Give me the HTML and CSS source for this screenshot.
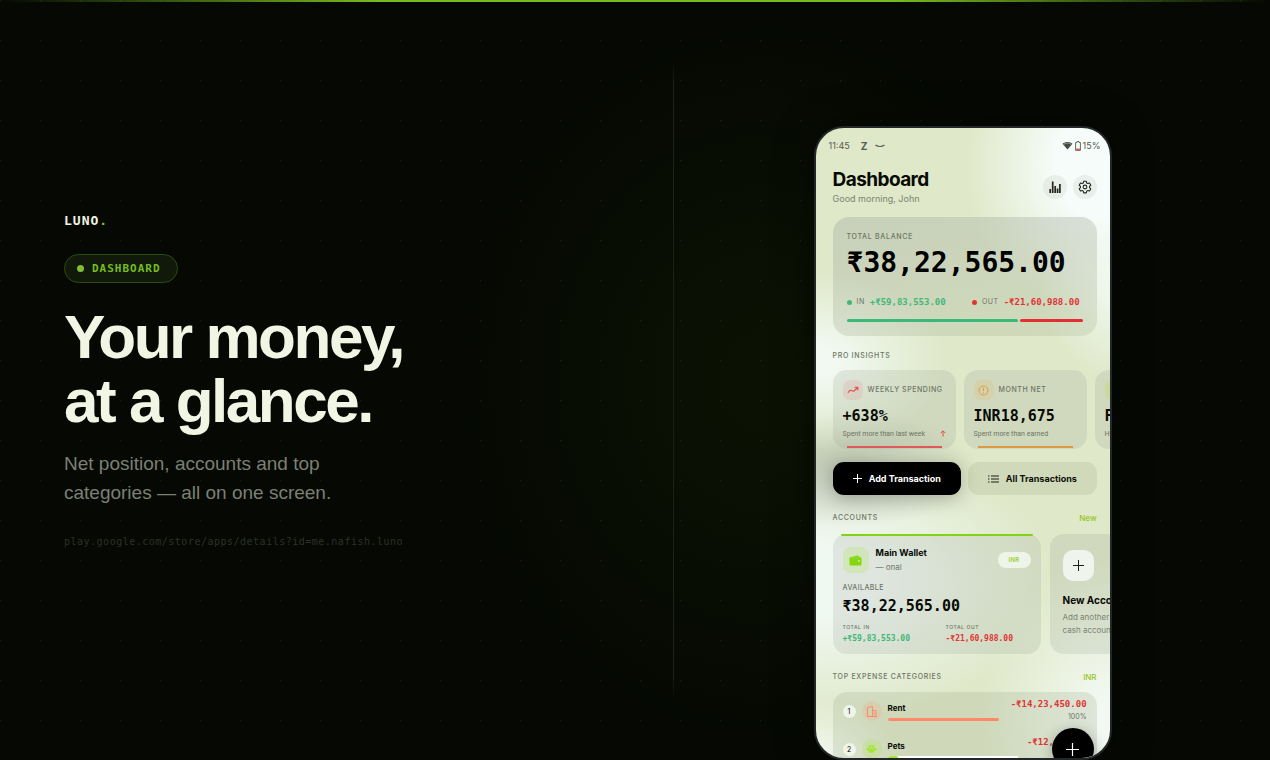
FILE: index.html
```html
<!DOCTYPE html>
<html lang="en">
<head>
    <meta charset="UTF-8">
    <title>Luno - Dashboard</title>
    <link rel="stylesheet" href="styles.css">
</head>
<body>
    <div class="slide">
        <section class="copy">
            <div class="brand">LUNO<span>.</span></div>
            <div class="tag"><i class="tag-dot"></i>DASHBOARD</div>
            <h1>Your money,<br>at a glance.</h1>
            <p class="lead">Net position, accounts and top<br>categories — all on one screen.</p>
            <p class="store">play.google.com/store/apps/details?id=me.nafish.luno</p>
        </section>

        <section class="stage">
            <div class="phone">
                <div class="status">
                    <span>11:45</span>
                    <b>Z</b>
                    <svg width="10" height="4" viewBox="0 0 10 4"><path d="M0.5 1C3 3 7 3 9.500 1" fill="none" stroke="#555b50" stroke-width="1.2"/></svg>
                    <span class="status-right">
                        <svg width="11" height="9" viewBox="0 0 12 10"><path d="M0.5 3C3.5 0.3 8.5 0.3 11.5 3L6 9.5Z" fill="#454a42"/><path d="M2 3.6C4.5 1.8 7.5 1.8 10 3.6" fill="none" stroke="#c7cec0" stroke-width="0.7"/></svg>
                        <svg width="6" height="10" viewBox="0 0 6 10"><path d="M2 0.5H4V1.5H5.4V9.4H0.6V1.5H2Z" fill="none" stroke="#555b50" stroke-width="0.9"/><path d="M1.2 7.5H4.8V9.200H1.2Z" fill="#d9604c"/></svg>
                        <span>15%</span>
                    </span>
                </div>

                <header class="top">
                    <div>
                        <h2>Dashboard</h2>
                        <p>Good morning, John</p>
                    </div>
                    <div class="top-actions">
                        <button class="round" aria-label="Statistics">
                            <svg width="12" height="14" viewBox="0 0 12 14" stroke="#23261f" stroke-width="1.7" fill="none"><path d="M1.2 13V9M3.7 13V1.5M6.200 13V6M8.600 13V8.5M10.900 13V4"/></svg>
                        </button>
                        <button class="round" aria-label="Settings">
                            <svg width="14" height="14" viewBox="0 0 24 24" fill="none" stroke="#23261f" stroke-width="1.8" stroke-linejoin="round"><path d="M9.8 2h4.4l.7 3 2 1.1 2.9-.9 2.2 3.8-2.2 2v2.1l2.2 2-2.2 3.8-2.9-.9-2 1.1-.7 3H9.8l-.7-3-2-1.1-2.9.9L2 15.100l2.200-2V11L2 9l2.200-3.800 2.900.9 2-1.100z"/><circle cx="12" cy="12" r="3.200"/></svg>
                        </button>
                    </div>
                </header>

                <div class="balance">
                    <div class="label">TOTAL BALANCE</div>
                    <div class="balance-amount">₹38,22,565.00</div>
                    <div class="flows">
                        <div class="flow in"><i></i><span>IN</span><b>+₹59,83,553.00</b></div>
                        <div class="flow out"><i></i><span>OUT</span><b>-₹21,60,988.00</b></div>
                    </div>
                    <div class="split"><i class="split-in"></i><i class="split-out"></i></div>
                </div>

                <div class="label section">PRO INSIGHTS</div>
                <div class="insights">
                    <div class="insight red">
                        <div class="insight-head">
                            <span class="chip"><svg width="12" height="8" viewBox="0 0 12 8" fill="none" stroke="#e5484d" stroke-width="1.1"><path d="M1 6.800Q3 3.500 4.500 4.500T7 5L10.500 1.500M7.500 1.200H10.800V4.400"/></svg></span>
                            <span class="label">WEEKLY SPENDING</span>
                        </div>
                        <div class="insight-value">+638%</div>
                        <div class="insight-note">Spent more than last week
                            <svg width="6" height="7" viewBox="0 0 6 7" fill="none" stroke="#e5484d" stroke-width="1"><path d="M3 6.500V1M0.600 3.200L3 0.800 5.400 3.200"/></svg>
                        </div>
                        <i class="underline"></i>
                    </div>
                    <div class="insight orange">
                        <div class="insight-head">
                            <span class="chip"><svg width="11" height="11" viewBox="0 0 11 11" fill="none" stroke="#e8963a" stroke-width="1"><circle cx="5.500" cy="5.500" r="4.500" stroke-dasharray="5 0.700"/><path d="M5.500 2.800V6M5.500 7.200V8.200"/></svg></span>
                            <span class="label">MONTH NET</span>
                        </div>
                        <div class="insight-value">INR18,675</div>
                        <div class="insight-note">Spent more than earned</div>
                        <i class="underline"></i>
                    </div>
                    <div class="insight lime">
                        <div class="insight-head"><span class="chip"></span></div>
                        <div class="insight-value">Food</div>
                        <div class="insight-note">Highest spend</div>
                    </div>
                </div>

                <div class="actions">
                    <button class="add"><svg width="9" height="9" viewBox="0 0 9 9" stroke="#fff"><path d="M4.500 0V9M0 4.500H9"/></svg>Add Transaction</button>
                    <button class="all"><svg width="11" height="8" viewBox="0 0 11 8" stroke="#1c1f18" stroke-width="1"><path d="M0 1H1.500M3 1H11M0 4H1.500M3 4H11M0 7H1.500M3 7H11"/></svg>All Transactions</button>
                </div>

                <div class="section-row">
                    <span class="label">ACCOUNTS</span>
                    <a href="#">New</a>
                </div>
                <div class="accounts">
                    <div class="wallet">
                        <div class="wallet-head">
                            <span class="wallet-icon"><svg width="13" height="11" viewBox="0 0 13 11"><path d="M0.500 2.500L8.500 0.500Q10 0.300 10 2H11Q12.500 2 12.500 3.500V9Q12.500 10.500 11 10.500H2Q0.500 10.500 0.500 9Z" fill="#84d60f"/><path d="M1.500 3H10" stroke="#a9e050" stroke-width="0.600"/><circle cx="9.800" cy="6" r="0.900" fill="#dcebb8"/></svg></span>
                            <div class="wallet-name"><strong>Main Wallet</strong><span>— onal</span></div>
                            <span class="currency">INR</span>
                        </div>
                        <div class="label small">AVAILABLE</div>
                        <div class="wallet-amount">₹38,22,565.00</div>
                        <div class="totals">
                            <div><div class="label tiny">TOTAL IN</div><b class="pos">+₹59,83,553.00</b></div>
                            <div><div class="label tiny">TOTAL OUT</div><b class="neg">-₹21,60,988.00</b></div>
                        </div>
                    </div>
                    <div class="new-account">
                        <button class="plus" aria-label="New account"><svg width="11" height="11" viewBox="0 0 11 11" stroke="#1c1f18"><path d="M5.500 0V11M0 5.500H11"/></svg></button>
                        <strong>New Account</strong>
                        <p>Add another<br>cash account</p>
                    </div>
                </div>

                <div class="section-row categories-title">
                    <span class="label">TOP EXPENSE CATEGORIES</span>
                    <a href="#">INR</a>
                </div>
                <div class="categories">
                    <div class="category rent">
                        <span class="rank">1</span>
                        <span class="cat-icon"><svg width="10" height="11" viewBox="0 0 10 11" fill="none" stroke="#ff8a6b" stroke-width="1"><path d="M0.500 10.500V1.500L5.500 0.500V10.500M5.500 4.500H9V10.500M0 10.500H10M7.200 6.500V8.500"/></svg></span>
                        <div class="cat-main"><strong>Rent</strong><i class="bar"><i style="width: 86%"></i></i></div>
                        <div class="cat-sum"><b>-₹14,23,450.00</b><span>100%</span></div>
                    </div>
                    <div class="category pets">
                        <span class="rank">2</span>
                        <span class="cat-icon"><svg width="11" height="10" viewBox="0 0 11 10" fill="#a3e635"><circle cx="2" cy="5" r="1.500"/><circle cx="4" cy="2.200" r="1.500"/><circle cx="7" cy="2.200" r="1.500"/><circle cx="9" cy="5" r="1.500"/><ellipse cx="5.500" cy="6.500" rx="3" ry="2.300"/></svg></span>
                        <div class="cat-main"><strong>Pets</strong><i class="bar"><i style="width: 8%"></i></i></div>
                        <div class="cat-sum"><b>-₹12,000.00</b></div>
                    </div>
                </div>
                <button class="fab" aria-label="Add"><svg width="13" height="13" viewBox="0 0 13 13" stroke="#fff" stroke-width="1.200"><path d="M6.500 0V13M0 6.500H13"/></svg></button>
            </div>
        </section>
    </div>
</body>
</html>
```
FILE: styles.css
```css
* {
    box-sizing: border-box;
}
body {
    margin: 0;
    background: #050803;
    font-family: "Liberation Sans", Arial, sans-serif;
}
h1, h2, p {
    margin: 0;
}
button {
    border: none;
    padding: 0;
    font-family: inherit;
    cursor: pointer;
}
svg {
    flex: none;
}
.slide {
    position: relative;
    display: flex;
    height: 100vh;
    overflow: hidden;
    background:
        radial-gradient(circle at 0 0, rgba(255, 255, 255, 0.07) 1px, transparent 2px) 0 0 / 40px 40px,
        radial-gradient(ellipse 320px 380px at 60% 50%, rgba(50, 80, 0, 0.15), transparent),
        #050803;
}
.slide::before {
    content: "";
    position: absolute;
    top: 0;
    left: 0;
    right: 0;
    height: 2px;
    background: linear-gradient(90deg, transparent, #76bc21 30%, #76bc21 70%, transparent);
}
.copy {
    flex: 0 0 53%;
    display: flex;
    flex-direction: column;
    justify-content: center;
    align-items: flex-start;
    padding-left: 64px;
}
.brand {
    font: bold 13px/16px "DejaVu Sans Mono", monospace;
    letter-spacing: 1px;
    color: #f1f5e4;
    margin-bottom: 25px;
}
.brand span {
    color: #7cc924;
}
.tag {
    display: flex;
    align-items: center;
    gap: 8px;
    height: 29px;
    padding: 0 16px 0 12px;
    border: 1px solid #2f4c10;
    border-radius: 15px;
    background: #10190a;
    color: #76bc21;
    font: bold 11px "DejaVu Sans Mono", monospace;
    letter-spacing: 1px;
    margin-bottom: 22px;
}
.tag-dot {
    width: 7px;
    height: 7px;
    border-radius: 50%;
    background: #84bd35;
}
h1 {
    font-size: 62px;
    line-height: 64px;
    letter-spacing: -0.04em;
    color: #f1f5e4;
    margin-bottom: 16px;
}
.lead {
    font-size: 19px;
    line-height: 29px;
    color: #7c8074;
    margin-bottom: 29px;
}
.store {
    font: 10px/12px "DejaVu Sans Mono", monospace;
    letter-spacing: 0.05em;
    color: #2d3129;
}
.stage {
    flex: 1;
    display: flex;
    justify-content: center;
    padding-top: 126px;
    position: relative;
}
.stage::before {
    content: "";
    position: absolute;
    left: 0;
    top: 60px;
    bottom: 60px;
    width: 1px;
    background: linear-gradient(transparent, #1c2117 4%, #1c2117 96%, transparent);
}
/* phone mockup, content runs off the bottom edge */
.phone {
    position: relative;
    width: 298px;
    height: 634px;
    margin-right: 18px;
    border: 2px solid #24272a;
    border-radius: 30px;
    overflow: hidden;
    padding: 0 13px 0 17px;
    color: #080a06;
    font-family: Inter, sans-serif;
    box-shadow: 0 0 40px rgba(0, 0, 0, 0.4);
    background:
        radial-gradient(ellipse 140px 150px at 98% 6%, #f6fcf9 35%, rgba(246, 252, 249, 0)),
        radial-gradient(ellipse 80px 90px at 104% 26%, #f0f8f0, rgba(240, 248, 240, 0)),
        radial-gradient(ellipse 130px 90px at 0% 37%, #f2f9f2 15%, rgba(244, 250, 242, 0)),
        radial-gradient(ellipse 130px 60px at 10% 54%, rgba(150, 158, 150, 0.5), rgba(150, 158, 150, 0)),
        radial-gradient(ellipse 240px 140px at 0% 72%, #f0f8f2 25%, rgba(242, 248, 240, 0)),
        radial-gradient(ellipse 130px 160px at 100% 94%, #f3f9f2 10%, rgba(244, 250, 242, 0)),
        radial-gradient(ellipse 80px 60px at 0% 100%, #f3f9f2, rgba(244, 250, 242, 0)),
        #dfe8c8;
}
.status {
    display: flex;
    align-items: center;
    gap: 11px;
    height: 35px;
    margin: 0 -4px;
    font-size: 9px;
    color: #555b50;
}
.status b {
    font-size: 10px;
}
.status > svg {
    margin-left: -3px;
}
.status-right {
    display: flex;
    align-items: center;
    gap: 2px;
    margin-left: auto;
}
.top {
    display: flex;
    justify-content: space-between;
    margin-top: 5px;
    height: 49px;
}
.top h2 {
    font-size: 19px;
    line-height: 24px;
    letter-spacing: -0.03em;
}
.top p {
    font-size: 9px;
    line-height: 14px;
    color: #7b8372;
}
.top-actions {
    display: flex;
    gap: 6px;
    padding-top: 7px;
}
.round {
    display: flex;
    align-items: center;
    justify-content: center;
    width: 24px;
    height: 24px;
    border-radius: 50%;
    background: rgba(120, 130, 110, 0.1);
}
.label {
    font-size: 7px;
    line-height: 8px;
    font-weight: 500;
    letter-spacing: 0.1em;
    color: #6d7565;
}
.balance {
    height: 119px;
    padding: 16px 14px 0;
    border-radius: 16px;
    background: linear-gradient(170deg, rgba(165, 172, 165, 0.4), rgba(175, 188, 155, 0.3));
}
.balance-amount {
    font: bold 28px/34px "DejaVu Sans Mono", monospace;
    color: #000;
    margin-top: 5px;
}
.flows {
    display: flex;
    justify-content: space-between;
    margin: 16px 3px 0 0;
}
.flow {
    display: flex;
    align-items: center;
    gap: 5px;
    font-size: 7px;
    line-height: 12px;
    letter-spacing: 0.08em;
    color: #6d7565;
}
.flow i {
    width: 5px;
    height: 5px;
    border-radius: 50%;
    background: currentColor;
}
.flow b {
    font: bold 9px/12px "DejaVu Sans Mono", monospace;
    letter-spacing: 0;
}
.in i, .in b, .pos {
    color: #3fb878;
}
.out i, .out b, .neg {
    color: #e03434;
}
.split {
    display: flex;
    gap: 2px;
    margin-top: 11px;
}
.split i {
    height: 3px;
    border-radius: 2px;
}
.split-in {
    flex: 58;
    background: #3cb878;
}
.split-out {
    flex: 21;
    background: #e23030;
}
.section {
    margin: 16px 0 10px;
}
.insights {
    display: flex;
    gap: 8px;
    margin-right: -13px;
    overflow: hidden;
}
.insight {
    position: relative;
    flex: 0 0 123px;
    height: 79px;
    padding: 10px 10px 0;
    border-radius: 14px;
    background: rgba(150, 162, 145, 0.2);
}
.insight-head {
    display: flex;
    align-items: center;
    gap: 5px;
    height: 20px;
    white-space: nowrap;
}
.insight-head .label {
    letter-spacing: 0.08em;
}
.chip {
    display: flex;
    align-items: center;
    justify-content: center;
    width: 20px;
    height: 20px;
    border-radius: 7px;
}
.red .chip {
    background: rgba(229, 72, 77, 0.1);
}
.orange .chip {
    background: rgba(232, 170, 58, 0.14);
}
.lime .chip {
    background: rgba(190, 220, 60, 0.25);
}
.insight-value {
    font: bold 15px/20px "DejaVu Sans Mono", monospace;
    margin-top: 6px;
}
.insight-note {
    display: flex;
    justify-content: space-between;
    font-family: Roboto, sans-serif;
    font-size: 7px;
    line-height: 8px;
    margin-top: 4px;
    color: #6d7565;
    white-space: nowrap;
}
.underline {
    position: absolute;
    left: 14px;
    right: 14px;
    bottom: 1px;
    height: 2px;
}
.red .underline {
    background: #dd5a58;
}
.orange .underline {
    background: #dd9a45;
}
.actions {
    display: flex;
    gap: 7px;
    margin-top: 13px;
}
.actions button {
    flex: 1;
    display: flex;
    align-items: center;
    justify-content: center;
    gap: 7px;
    height: 33px;
    border-radius: 11px;
    font-size: 9px;
    font-weight: 700;
}
.add {
    background: #000;
    color: #fff;
    box-shadow: 0 4px 20px rgba(0, 0, 0, 0.25);
}
.all {
    background: rgba(150, 165, 130, 0.2);
    color: #0c0e09;
}
.section-row {
    display: flex;
    align-items: center;
    justify-content: space-between;
    height: 10px;
    margin: 18px 0 11px;
}
.section-row a {
    font-size: 8px;
    font-weight: 500;
    color: #98c51d;
    text-decoration: none;
}
.accounts {
    display: flex;
    gap: 9px;
    margin-right: -13px;
    overflow: hidden;
}
.wallet {
    position: relative;
    flex: 0 0 208px;
    height: 120px;
    padding: 12px 10px 0;
    border-radius: 14px;
    background: rgba(150, 160, 150, 0.2);
}
.wallet::before {
    content: "";
    position: absolute;
    top: 0;
    left: 8px;
    right: 8px;
    height: 2px;
    border-radius: 2px;
    background: #80d414;
}
.wallet-head {
    display: flex;
    align-items: center;
    height: 28px;
}
.wallet-icon {
    display: flex;
    align-items: center;
    justify-content: center;
    width: 26px;
    height: 26px;
    border-radius: 8px;
    background: rgba(190, 225, 120, 0.35);
}
.wallet-name {
    flex: 1;
    margin-left: 7px;
}
.wallet-name strong {
    display: block;
    font-size: 9px;
    line-height: 14px;
    font-weight: 700;
}
.wallet-name span {
    display: block;
    font-size: 8px;
    line-height: 14px;
    color: #6d7565;
}
.currency {
    width: 33px;
    border-radius: 8px;
    background: #eef5e8;
    color: #98d030;
    font-size: 6px;
    line-height: 16px;
    font-weight: 600;
    text-align: center;
    letter-spacing: 0.06em;
}
.small {
    margin-top: 10px;
    letter-spacing: 0.06em;
}
.wallet-amount {
    font: bold 15px/20px "DejaVu Sans Mono", monospace;
    margin-top: 4px;
}
.totals {
    display: grid;
    grid-template-columns: 103px 1fr;
    margin-top: 7px;
    white-space: nowrap;
}
.tiny {
    font-size: 5px;
    letter-spacing: 0.12em;
}
.totals b {
    display: block;
    font: bold 8px/16px "DejaVu Sans Mono", monospace;
}
.new-account {
    flex: 0 0 120px;
    padding: 16px 13px 0;
    border-radius: 14px;
    background: rgba(150, 160, 150, 0.2);
    white-space: nowrap;
}
.plus {
    display: flex;
    align-items: center;
    justify-content: center;
    width: 31px;
    height: 31px;
    border-radius: 10px;
    background: #eff5ec;
}
.new-account strong {
    display: block;
    font-size: 10px;
    line-height: 14px;
    font-weight: 700;
    margin-top: 12px;
}
.new-account p {
    font-size: 8px;
    line-height: 13px;
    margin-top: 4px;
    color: #7b8372;
}
.categories-title {
    margin: 18px 0 10px;
}
.categories {
    padding: 0 10px;
    border-radius: 14px;
    background: rgba(150, 165, 130, 0.22);
    height: 120px;
}
.category {
    display: flex;
    height: 38px;
    padding-top: 6px;
}
.rank {
    flex: none;
    width: 13px;
    height: 13px;
    margin-top: 7px;
    border-radius: 50%;
    background: #f0f5ea;
    font-size: 7px;
    line-height: 13px;
    text-align: center;
}
.cat-icon {
    flex: none;
    display: flex;
    align-items: center;
    justify-content: center;
    width: 20px;
    height: 20px;
    margin: 3px 6px 0;
    border-radius: 50%;
}
.rent .cat-icon {
    background: rgba(255, 138, 107, 0.15);
}
.pets .cat-icon {
    background: rgba(163, 230, 53, 0.2);
}
.cat-main {
    flex: none;
    width: 130px;
    padding-top: 4px;
}
.cat-main strong {
    display: block;
    font-size: 8px;
    line-height: 12px;
    font-weight: 700;
}
.bar {
    display: block;
    height: 3px;
    margin-top: 4px;
}
.bar i {
    display: block;
    height: 3px;
    border-radius: 2px;
    background: #ff8a6b;
}
.pets .bar {
    background: #fff;
}
.pets .bar i {
    background: #a3e635;
}
.cat-sum {
    flex: 1;
    display: flex;
    flex-direction: column;
    align-items: flex-end;
    min-width: 0;
    white-space: nowrap;
}
.cat-sum b {
    font: bold 9px/13px "DejaVu Sans Mono", monospace;
    color: #e03434;
}
.cat-sum span {
    font-size: 7px;
    line-height: 12px;
    color: #6d7565;
}
.fab {
    position: absolute;
    right: 16px;
    bottom: -12px;
    display: flex;
    align-items: center;
    justify-content: center;
    width: 42px;
    height: 42px;
    border-radius: 50%;
    background: #000;
    box-shadow: 0 3px 14px rgba(0, 0, 0, 0.3);
}
```
